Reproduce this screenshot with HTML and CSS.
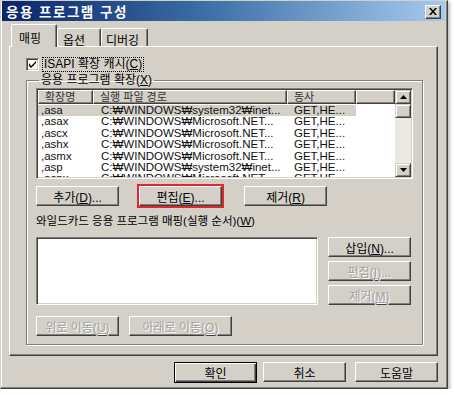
FILE: index.html
```html
<!DOCTYPE html>
<html lang="ko">
<head>
  <meta charset="UTF-8">
  <title>응용 프로그램 구성</title>
  <link rel="stylesheet" href="styles.css">
</head>
<body>
  <div class="window">
    <div class="titlebar">
      <span class="title">응용 프로그램 구성</span>
      <span class="close">
        <svg width="8" height="7" viewBox="0 0 8 7"><path d="M0 0h2l2 2.5L6 0h2L5 3.5 8 7H6L4 4.5 2 7H0l3-3.5z" fill="#000"/></svg>
      </span>
    </div>

    <div class="tabs">
      <div class="tab active">매핑</div>
      <div class="tab">옵션</div>
      <div class="tab">디버깅</div>
    </div>

    <div class="panel">
      <div class="check-row">
        <span class="checkbox">
          <svg width="7" height="7" viewBox="0 0 7 7"><path d="M0 2v3l2 2 5-5V-0L2 5z" fill="#000"/></svg>
        </span>
        <span class="focus">ISAPI 확장 캐시(<u>C</u>)</span>
      </div>

      <fieldset class="group">
        <legend>응용 프로그램 확장(<u>X</u>)</legend>

        <div class="listview">
          <div class="list-main">
            <div class="list-head">
              <span class="c1">확장명</span>
              <span class="c2">실행 파일 경로</span>
              <span class="c3">동사</span>
              <span class="c4"></span>
            </div>
            <div class="list-body">
              <div class="row sel"><span class="c1">,asa</span><span class="c2">C:₩WINDOWS₩system32₩inet...</span><span class="c3">GET,HE...</span></div>
              <div class="row"><span class="c1">,asax</span><span class="c2">C:₩WINDOWS₩Microsoft.NET...</span><span class="c3">GET,HE...</span></div>
              <div class="row"><span class="c1">,ascx</span><span class="c2">C:₩WINDOWS₩Microsoft.NET...</span><span class="c3">GET,HE...</span></div>
              <div class="row"><span class="c1">,ashx</span><span class="c2">C:₩WINDOWS₩Microsoft.NET...</span><span class="c3">GET,HE...</span></div>
              <div class="row"><span class="c1">,asmx</span><span class="c2">C:₩WINDOWS₩Microsoft.NET...</span><span class="c3">GET,HE...</span></div>
              <div class="row"><span class="c1">,asp</span><span class="c2">C:₩WINDOWS₩system32₩inet...</span><span class="c3">GET,HE...</span></div>
              <div class="row"><span class="c1">,aspx</span><span class="c2">C:₩WINDOWS₩Microsoft.NET...</span><span class="c3">GET,HE...</span></div>
            </div>
          </div>
          <div class="vscroll">
            <span class="sbtn"><svg width="7" height="4" viewBox="0 0 7 4"><path d="M3.5 0L7 4H0z" fill="#000"/></svg></span>
            <div class="track"><span class="thumb"></span></div>
            <span class="sbtn"><svg width="7" height="4" viewBox="0 0 7 4"><path d="M0 0h7L3.5 4z" fill="#000"/></svg></span>
          </div>
        </div>

        <div class="btn-row">
          <button class="btn">추가(<u>D</u>)...</button>
          <button class="btn marked">편집(<u>E</u>)...</button>
          <button class="btn">제거(<u>R</u>)</button>
        </div>

        <div class="label">와일드카드 응용 프로그램 매핑(실행 순서)(<u>W</u>)</div>

        <div class="wild">
          <div class="wild-list"></div>
          <div class="wild-btns">
            <button class="btn">삽입(<u>N</u>)...</button>
            <button class="btn" disabled>편집(<u>I</u>)...</button>
            <button class="btn" disabled>제거(<u>M</u>)</button>
          </div>
        </div>

        <div class="move-row">
          <button class="btn" disabled>위로 이동(<u>U</u>)</button>
          <button class="btn wide" disabled>아래로 이동(<u>O</u>)</button>
        </div>
      </fieldset>
    </div>

    <div class="footer">
      <button class="btn default">확인</button>
      <button class="btn">취소</button>
      <button class="btn">도움말</button>
    </div>
  </div>
</body>
</html>
```

FILE: styles.css
```css
body { margin: 0; background: #fff; font-family: "Liberation Sans", "Noto Sans CJK KR", sans-serif; font-size: 11px; color: #000; }
u { text-decoration: underline; text-underline-offset: 1px; }

.window { width: 448px; height: 389px; box-sizing: border-box; background: #d4d0c8; border: 1px solid; border-color: #d4d0c8 #404040 #404040 #d4d0c8; box-shadow: inset -1px -1px #808080, inset 1px 1px #fff, 2px 2px 3px rgba(0,0,0,0.25); padding: 0 2px 0 1px; }

.titlebar { height: 20px; display: flex; align-items: center; justify-content: space-between; padding: 0 4px 0 4px; background: linear-gradient(to right, #0a246a, #3a6ea5 45%, #a6caf0); }
.title { color: #fff; font-weight: bold; font-size: 13.5px; letter-spacing: 1.5px; }
.close { width: 16px; height: 14px; box-sizing: border-box; display: flex; align-items: center; justify-content: center; background: #d4d0c8; border: 1px solid; border-color: #fff #404040 #404040 #fff; box-shadow: inset -1px -1px #808080; margin-top: 1px; }

.tabs { display: flex; align-items: flex-end; height: 22px; margin: 3px 0 0 9px; position: relative; z-index: 1; }
.tab { height: 18px; box-sizing: border-box; padding: 2px 0 0 8px; white-space: nowrap; border: 1px solid; border-bottom: none; border-color: #fff #404040 transparent #fff; box-shadow: inset -1px 0 #808080; border-radius: 2px 2px 0 0; font-size: 12px; }
.tab.active { height: 23px; width: 46px; padding: 4px 0 0 7px; background: #d4d0c8; margin-bottom: -1px; }
.tab:nth-child(2) { width: 44px; padding-left: 5px; }
.tab:nth-child(3) { width: 47px; padding-left: 4px; }

.panel { margin-left: 7px; width: 429px; height: 310px; box-sizing: border-box; border: 1px solid; border-color: #fff #404040 #404040 #fff; box-shadow: inset -1px -1px #808080; }

.check-row { display: flex; align-items: center; gap: 4px; margin: 11px 0 0 16px; height: 13px; font-size: 12px; }
.checkbox { width: 13px; height: 13px; box-sizing: border-box; background: #fff; border: 1px solid; border-color: #808080 #fff #fff #808080; box-shadow: inset 1px 1px #404040, inset -1px -1px #d4d0c8; display: flex; align-items: center; justify-content: center; }
.focus { outline: 1px dotted #000; outline-offset: 0; padding: 0 1px; line-height: 13px; }

.group { margin: 2px 0 0 16px; width: 395px; height: 272px; box-sizing: border-box; padding: 1px 9px 0 9px; border: 1px solid #808080; box-shadow: inset 1px 1px #fff, 1px 1px #fff; }
.group legend { padding: 0 2px; margin-left: 3px; font-size: 12px; line-height: 14px; }

.listview { display: flex; height: 91px; box-sizing: border-box; border: 1px solid; border-color: #808080 #fff #fff #808080; box-shadow: inset 1px 1px #404040, inset -1px -1px #d4d0c8; padding: 1px; background: #fff; }
.list-main { flex: 1; overflow: hidden; }
.list-head { display: flex; height: 14px; }
.list-head span { box-sizing: border-box; height: 14px; line-height: 13px; padding-left: 6px; background: #d4d0c8; border: 1px solid; border-color: #fff #404040 #404040 #fff; box-shadow: inset -1px -1px #808080; color: #333; font-size: 11px; }
.c1 { width: 55px; }
.c2 { width: 194px; }
.c3 { width: 69px; }
.c4 { width: 39px; }
.list-body { padding-top: 1px; }
.row { display: flex; height: 11.4px; line-height: 11.4px; font-size: 11.5px; color: #111; white-space: nowrap; }
.row span { padding-left: 3px; box-sizing: border-box; overflow: hidden; }
.row .c2 { padding-left: 8px; }
.row .c3 { padding-left: 7px; }
.row.sel { background: #d4d0c8; width: 318px; }

.vscroll { width: 16px; display: flex; flex-direction: column; background: #ece9e4; }
.sbtn { width: 16px; height: 14px; box-sizing: border-box; background: #d4d0c8; border: 1px solid; border-color: #d4d0c8 #404040 #404040 #d4d0c8; box-shadow: inset 1px 1px #fff, inset -1px -1px #808080; display: flex; align-items: center; justify-content: center; }
.track { flex: 1; }
.thumb { display: block; height: 14px; box-sizing: border-box; background: #d4d0c8; border: 1px solid; border-color: #d4d0c8 #404040 #404040 #d4d0c8; box-shadow: inset 1px 1px #fff, inset -1px -1px #808080; }

.btn { width: 83px; height: 20px; box-sizing: border-box; padding: 0; background: #d4d0c8; border: 1px solid; border-color: #fff #404040 #404040 #fff; box-shadow: inset -1px -1px #808080; font-family: "Liberation Sans", "Noto Sans CJK KR", sans-serif; font-size: 12px; color: #000; }
.btn:disabled { color: #a0a0a0; text-shadow: 1px 1px #fff; }
.btn.marked { outline: 2px solid #e0282c; outline-offset: 0; }
.btn.wide { width: 103px; }
.btn.default { border: 1px solid #000; box-shadow: inset 1px 1px #fff, inset -1px -1px #404040, inset -2px -2px #808080; height: 21px; }

.btn-row { display: flex; gap: 20px; margin-top: 7px; }
.btn-row .btn:last-child { margin-left: 2px; }
.label { margin-top: 8px; font-size: 11.5px; line-height: 14px; }
.wild { display: flex; gap: 10px; margin-top: 9px; }
.wild-list { width: 282px; height: 68px; box-sizing: border-box; background: #fff; border: 1px solid; border-color: #808080 #fff #fff #808080; box-shadow: inset 1px 1px #404040, inset -1px -1px #d4d0c8; }
.wild-btns { display: flex; flex-direction: column; gap: 4px; }
.move-row { display: flex; gap: 10px; margin-top: 11px; }

.footer { display: flex; justify-content: flex-end; gap: 6px; padding: 6px 7px 0 0; }
.footer .btn:last-child { margin-left: 3px; }
```
